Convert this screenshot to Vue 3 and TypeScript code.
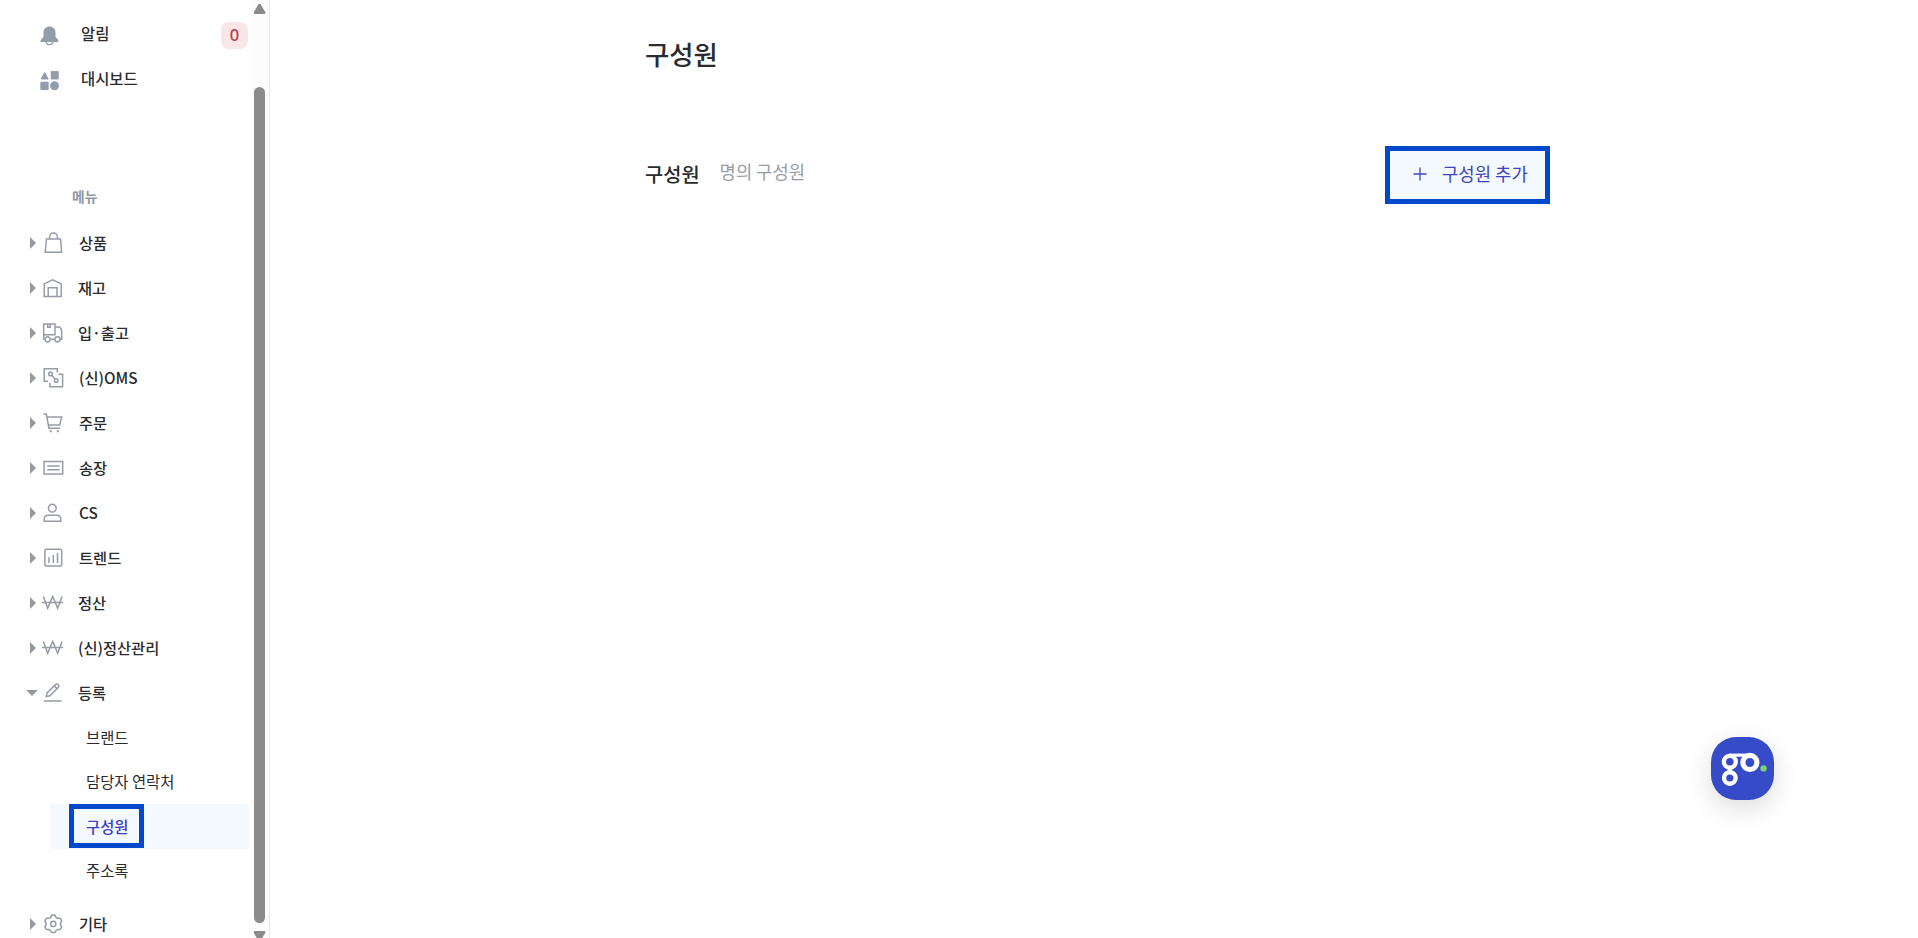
<template>
  <div class="layout">
    <aside class="sidebar">
      <nav class="nav">
        <div class="shortcut">
          <svg class="shortcutIcon" viewBox="0 0 20 20">
            <path d="M9.500 .500C6 .500 3.500 3 3.500 6.500v3.500C3.500 12.200 .400 13 .400 15.200c0 .600.300.800.800.800H17.800c.500 0 .800-.200.800-.800C18.600 13 15.500 12.200 15.500 10V6.500C15.500 3 13 .500 9.500 .500z" fill="#949dac" />
            <path d="M6.200 15.500a3.300 3.100 0 0 0 6.600 0" fill="none" stroke="#949dac" stroke-width="1.300" />
          </svg>
          <span class="shortcutName">알림</span>
          <span class="badge">{{ alarmCount }}</span>
        </div>
        <div class="shortcut">
          <svg class="shortcutIcon dashboard" viewBox="0 0 20 20" fill="#949dac">
            <path d="M4.700 1.500 8.200 8H1.200z" stroke="#949dac" stroke-linejoin="round" />
            <rect x="10.700" y="0" width="8.100" height="8.500" rx="1" />
            <rect x=".300" y="10.700" width="8.400" height="8.300" rx="1" />
            <circle cx="14.500" cy="14.800" r="4.500" />
          </svg>
          <span class="shortcutName">대시보드</span>
        </div>

        <div class="menuTitle">메뉴</div>

        <template v-for="m in menus" :key="m.name">
          <div class="menu" @click="toggle(m)">
            <span class="caret" :class="{ open: m.open }"></span>
            <svg class="menuIcon" :class="m.icon" viewBox="0 0 23 23">
              <path v-for="d in icons[m.icon]" :key="d" :d="d" />
            </svg>
            <span class="menuName">{{ m.name }}</span>
          </div>
          <div class="subMenu" v-if="m.children && m.open">
            <div
              class="subItem"
              :class="{ active: s == current }"
              v-for="s in m.children"
              :key="s"
              @click="current = s"
            >
              <span>{{ s }}</span>
            </div>
          </div>
        </template>
      </nav>
      <div class="scrollbar">
        <span class="arrow up"></span>
        <span class="thumb"></span>
        <span class="arrow down"></span>
      </div>
    </aside>

    <main class="content">
      <h1>구성원</h1>
      <div class="listHead">
        <h2>구성원</h2>
        <span class="count">명의 구성원</span>
        <button class="addBtn">
          <svg viewBox="0 0 14 14"><path d="M7 0.500V13.500M.5 7H13.500" /></svg>
          <span>구성원 추가</span>
        </button>
      </div>
    </main>

    <div class="chat">
      <svg viewBox="0 0 63 63" fill="none" stroke="#fff">
        <circle cx="19" cy="25" r="6" stroke-width="4.400" />
        <circle cx="39.200" cy="25.700" r="7.100" stroke-width="5.200" />
        <circle cx="19" cy="41.300" r="5.800" stroke-width="4.400" />
        <path d="M18 18.300H39" stroke-width="3.200" />
        <path d="M19 32v4" stroke-width="4" />
        <circle cx="53" cy="31.700" r="3.200" fill="#7fd069" stroke="none" />
      </svg>
    </div>
  </div>
</template>

<script lang="ts" setup>
import { ref } from "vue";

interface Menu {
  name: string;
  icon: string;
  open?: boolean;
  children?: string[];
}

const alarmCount = ref(0);
const current = ref("구성원");

const menus = ref<Menu[]>([
  { name: "상품", icon: "bag" },
  { name: "재고", icon: "warehouse" },
  { name: "입·출고", icon: "truck" },
  { name: "(신)OMS", icon: "link" },
  { name: "주문", icon: "cart" },
  { name: "송장", icon: "invoice" },
  { name: "CS", icon: "person" },
  { name: "트렌드", icon: "chart" },
  { name: "정산", icon: "won" },
  { name: "(신)정산관리", icon: "won" },
  {
    name: "등록",
    icon: "pencil",
    open: true,
    children: ["브랜드", "담당자 연락처", "구성원", "주소록"],
  },
  { name: "기타", icon: "gear" },
]);

const icons: Record<string, string[]> = {
  bag: ["M4.500 8H18.500L19.700 21.200H3.200Z", "M7.600 8V5.900a3.900 3.900 0 0 1 7.800 0v2.100"],
  warehouse: ["M2.200 20.400V7.900L10.500 3.800l8.700 4.100v12.500Z", "M6.200 20.400V11.700h8.800v8.700"],
  truck: [
    "M2.900 18.300H1.700V3H13v10.800H1.700",
    "M5.700 3v3.200h2.600V3",
    "M13 6h3c2.500 0 3.700 2 3.700 5v7.300H18",
    "M8.300 18.300h4.300",
    "M8.200 18.300a2.600 2.600 0 1 1-5.200 0a2.600 2.600 0 1 1 5.200 0",
    "M18 18.300a2.600 2.600 0 1 1-5.200 0a2.600 2.600 0 1 1 5.200 0",
  ],
  link: [
    "M6 15.200H2.200V2.800H15.200V6.500",
    "M16.500 8.300h4.100V20.800H7.900V17",
    "M10.300 7.900a1.800 1.800 0 1 1-3.600 0a1.800 1.800 0 1 1 3.600 0",
    "M16 14.500a1.800 1.800 0 1 1-3.600 0a1.800 1.800 0 1 1 3.600 0",
    "M9.800 9.200l3.300 3.800",
  ],
  cart: [
    "M1.500 3.100H4.300L7 17.300H18",
    "M4.800 6H19.700L17.700 14H6.300",
    "M7.800 19.900h1.900M14.900 19.900h1.900",
    "M7.800 20.500h1.900M14.900 20.500h1.900",
  ],
  invoice: ["M2 5.500H20.700V17.900H2Z", "M5.200 9.900H17.700M5.200 13.700H17.700"],
  person: [
    "M14.200 7.200a3.900 3.900 0 1 1-7.800 0a3.900 3.900 0 1 1 7.800 0",
    "M2.200 20.200V18.200c0-2.500 1.800-4 4.500-4h7.600c2.700 0 4.500 1.500 4.500 4v2Z",
  ],
  chart: ["M4 3.200H18.500L19.700 4.300V18.900L18.500 20.100H4L2.900 18.900V4.300Z", "M7 11.200V17M11.300 9V17M15.500 6.800V17"],
  won: ["M1.400 5.400 5.700 17.200 10.700 5.400 15.700 17.200 20 5.400", "M0 11.500H21.200"],
  pencil: [
    "M2 20H19.500",
    "M4.300 15.500 5 11.900 13.600 3.500Q14.800 2.300 16.200 3.600Q17.600 5 16.400 6.300L7.900 14.700Z",
    "M12.300 4.900l2.700 2.700",
  ],
  gear: [
    "M9.600 3.300Q11.400 2.700 13 3.300L14.200 5.600 15.500 6.300 18.100 6.300Q19.400 7.500 19.700 9.200L18.400 11.300V12.500L19.700 14.600Q19.400 16.300 18.100 17.500L15.500 17.500 14.200 18.200 13 20.300Q11.400 20.900 9.600 20.300L8.400 18.200 7.100 17.500 4.500 17.500Q3.200 16.300 2.900 14.600L4.200 12.500V11.300L2.900 9.200Q3.200 7.500 4.500 6.300L7.100 6.300 8.400 5.600Z",
    "M13.900 11.900a2.600 2.600 0 1 1-5.200 0a2.600 2.600 0 1 1 5.200 0",
  ],
};

function toggle(m: Menu) {
  if (m.children) {
    m.open = !m.open;
  }
}
</script>

<style>
body {
  overflow: hidden;
  background-color: #fff;
}
</style>

<style scoped>
* {
  box-sizing: border-box;
}

.layout {
  display: flex;
  height: 938px;
  overflow: hidden;
  font-family: "Noto Sans CJK KR", "Noto Sans", sans-serif;
  color: #292b2e;
}

.sidebar {
  display: flex;
  width: 270px;
  flex-shrink: 0;
  border-right: 1px solid #e8e9eb;
}

.nav {
  width: 252px;
  height: 938px;
  overflow: hidden;
  padding-top: 12px;
}

.shortcut {
  display: flex;
  align-items: center;
  height: 45px;
  padding: 0 4px 0 40px;
  font-size: 15.4px;
  font-weight: 500;
}

.shortcutIcon {
  width: 20px;
  height: 20px;
  margin-top: 2px;
}

.shortcutIcon.dashboard {
  margin-top: 3px;
}

.shortcutName {
  flex: 1;
  margin-left: 21px;
  padding-bottom: 3px;
  line-height: 22px;
}

.badge {
  width: 27px;
  height: 27px;
  margin-top: 2px;
  border-radius: 8px;
  background-color: #fae6e7;
  color: #b93b4b;
  font-family: "Noto Sans", sans-serif;
  font-size: 16.500px;
  line-height: 26px;
  text-align: center;
}

.menuTitle {
  height: 118px;
  padding: 84px 0 0 72px;
  color: #8f97a3;
  font-size: 13.800px;
  font-weight: 700;
  line-height: 20px;
}

.menu {
  display: flex;
  align-items: center;
  height: 45px;
  cursor: pointer;
}

.caret {
  margin-left: 30px;
  border-left: 6px solid #96999e;
  border-top: 6px solid transparent;
  border-bottom: 6px solid transparent;
}

.caret.open {
  margin-left: 26px;
  margin-right: -2px;
  border-top: 6px solid #96999e;
  border-left: 6px solid transparent;
  border-right: 6px solid transparent;
  border-bottom: 0;
}

.menuIcon {
  width: 23px;
  height: 23px;
  margin: 0 14px 0 6px;
  fill: none;
  stroke: #969ca6;
  stroke-width: 1.500;
}

.menuIcon.warehouse,
.menuIcon.truck,
.menuIcon.won,
.menuIcon.pencil {
  margin-right: 13px;
}

.menuName {
  padding-bottom: 2px;
  font-size: 15.300px;
  font-weight: 500;
  line-height: 22px;
}

.subMenu {
  margin-bottom: 8px;
}

.subItem {
  display: flex;
  align-items: center;
  height: 44.500px;
  margin: 0 3px 0 50px;
  padding-left: 19px;
  font-size: 15.400px;
  cursor: pointer;
}

.subItem span {
  padding: 0 12px 1px 17px;
}

.subItem.active {
  background-color: #f4f8ff;
  color: #3b3fc4;
  font-weight: 500;
}

.subItem.active span {
  width: 75px;
  height: 44px;
  padding: 0 0 0 12px;
  border: 5px solid #0049cc;
  line-height: 34px;
  white-space: nowrap;
}

.scrollbar {
  display: flex;
  flex-direction: column;
  align-items: center;
  width: 17px;
  padding: 4px 2px 0 0;
  background-color: #fcfcfc;
}

.arrow {
  width: 12px;
  height: 10px;
  flex-shrink: 0;
  background-color: #8b8b8b;
}

.arrow.up {
  clip-path: polygon(42% 0, 58% 0, 100% 85%, 96% 100%, 4% 100%, 0 85%);
}

.arrow.down {
  margin-top: 8px;
  clip-path: polygon(4% 0, 96% 0, 100% 15%, 58% 100%, 42% 100%, 0 15%);
}

.thumb {
  width: 11px;
  height: 836px;
  flex-shrink: 0;
  margin-top: 73px;
  border-radius: 6px;
  background-color: #8b8b8b;
}

.content {
  width: 1280px;
  padding: 34px 0 0 375px;
}

h1 {
  margin: 0;
  font-size: 26.400px;
  font-weight: 500;
  line-height: 40px;
}

.listHead {
  display: flex;
  align-items: center;
  height: 58px;
  margin-top: 72px;
}

h2 {
  margin: 0;
  padding-bottom: 3px;
  font-size: 19.800px;
  font-weight: 500;
  line-height: 30px;
}

.count {
  margin-left: 20px;
  padding-bottom: 8px;
  color: #979da6;
  font-size: 17.700px;
}

.addBtn {
  display: flex;
  align-items: center;
  width: 165px;
  height: 58px;
  margin-left: auto;
  padding: 0 0 3px 23px;
  border: 5px solid #0049cc;
  background-color: #f4f8ff;
  color: #3f43bd;
  font-family: inherit;
  font-size: 17.800px;
  white-space: nowrap;
  cursor: pointer;
}

.addBtn span {
  padding-bottom: 2px;
}

.addBtn svg {
  width: 14px;
  height: 14px;
  margin-right: 15px;
  fill: none;
  stroke: #3f43bd;
  stroke-width: 1.300;
}

.chat {
  position: fixed;
  right: 144.500px;
  bottom: 138.500px;
  width: 62.500px;
  height: 63px;
  border-radius: 25px;
  background-color: #354bc8;
  box-shadow: 0 8px 26px rgba(0, 0, 0, 0.14);
  cursor: pointer;
}

.chat svg {
  display: block;
}
</style>
